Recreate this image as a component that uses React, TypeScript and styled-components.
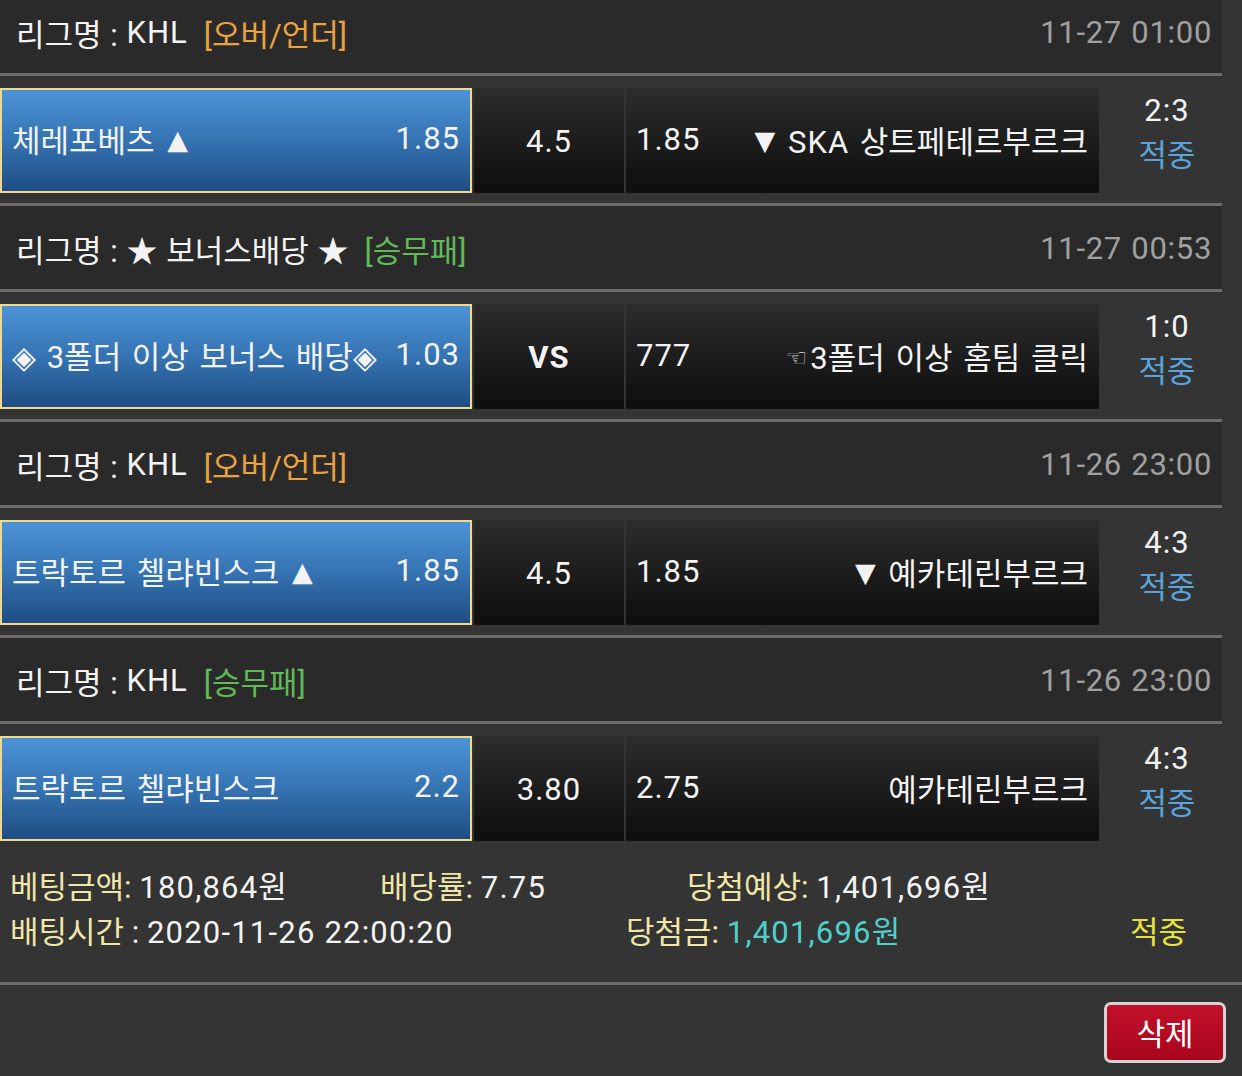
import styled, { createGlobalStyle } from "styled-components";

type TagKind = "ou" | "wdl";

interface Game {
  league: React.ReactNode;
  tag: string;
  tagKind: TagKind;
  date: string;
  home: React.ReactNode;
  homeOdds: string;
  middle: string;
  middleBold?: boolean;
  awayOdds: string;
  away: React.ReactNode;
  score: string;
  result: string;
}

const GlobalStyle = createGlobalStyle`
  html, body {
    margin: 0;
    padding: 0;
    background: #343434;
  }
  body {
    font-family: Roboto, "Noto Sans CJK KR", sans-serif;
    color: #f3f3f3;
  }
`;

const Page = styled.div`
  width: 1242px;
  height: 1076px;
  overflow: hidden;
  background: #343434;
`;

const List = styled.div`
  width: 1222px;
  margin-top: -10px;
`;

const LeagueHeader = styled.div`
  height: 83px;
  display: flex;
  align-items: center;
  justify-content: space-between;
  padding: 0 10px 0 16px;
  background: #2a2a2a;
  border-bottom: 3px solid #6b6b6b;
  font-size: 31px;
  word-spacing: 1px;
`;

const LeagueName = styled.div`
  display: flex;
  align-items: center;
  white-space: pre;
  padding-top: 2px;
`;

const Latin = styled.span`
  letter-spacing: 1px;
`;

const Tag = styled.span<{ $kind: TagKind }>`
  margin-left: 16px;
  color: ${(p) => (p.$kind === "ou" ? "#e9a23e" : "#62b957")};
`;

const GameDate = styled.div`
  color: #a0a0a0;
  letter-spacing: 0.7px;
  padding-top: 2px;
`;

const BetRow = styled.div<{ $last?: boolean }>`
  display: grid;
  grid-template-columns: 472px 150px 473px 1fr;
  column-gap: 2px;
  padding: ${(p) => (p.$last ? "12px 0 0" : "12px 0 10px")};
  background: #343434;
  border-bottom: ${(p) => (p.$last ? "none" : "3px solid #6b6b6b")};
`;

const HomeCell = styled.div`
  height: 105px;
  box-sizing: border-box;
  display: flex;
  align-items: center;
  justify-content: space-between;
  padding: 0 10px 5px 10px;
  border: 2px solid #f1d88f;
  background: linear-gradient(180deg, #4c93d6 0%, #3573b2 50%, #1e4d83 100%);
  font-size: 31px;
  white-space: nowrap;
  word-spacing: 3px;
`;

const Odds = styled.span`
  letter-spacing: 1px;
`;

const Arrow = styled.span`
  display: inline-block;
  vertical-align: 3px;
  font-family: "DejaVu Sans", sans-serif;
  font-size: 27px;
  margin: 0 2px;
`;

const MiddleCell = styled.div<{ $bold?: boolean }>`
  height: 105px;
  display: flex;
  align-items: center;
  justify-content: center;
  padding-top: 2px;
  box-sizing: border-box;
  background: linear-gradient(180deg, #2d2d2d 0%, #1b1b1b 55%, #0e0e0e 100%);
  font-size: 31px;
  font-weight: ${(p) => (p.$bold ? 700 : 400)};
  letter-spacing: 1px;
`;

const AwayCell = styled.div`
  height: 105px;
  display: flex;
  align-items: center;
  justify-content: space-between;
  padding: 0 11px 3px 10px;
  box-sizing: border-box;
  background: linear-gradient(180deg, #2d2d2d 0%, #1b1b1b 55%, #0e0e0e 100%);
  font-size: 31px;
  white-space: nowrap;
  word-spacing: 3px;
`;

const AwayName = styled.span`
  white-space: pre;
`;

const Hand = styled.span`
  display: inline-block;
  vertical-align: 3px;
  font-family: "DejaVu Sans", sans-serif;
  font-size: 24px;
  color: #d8d8d8;
  margin-right: 3px;
`;

const ScoreCol = styled.div`
  display: flex;
  flex-direction: column;
  align-items: center;
  padding-left: 11px;
  font-size: 31px;
  line-height: 45px;
`;

const Score = styled.span`
  letter-spacing: 1px;
`;

const Result = styled.span`
  color: #5aa2dc;
`;

const Summary = styled.div`
  padding: 24px 0 27px 10px;
  font-size: 31px;
  border-bottom: 3px solid #6b6b6b;
`;

const SummaryLine = styled.div<{ $cols: string }>`
  display: grid;
  grid-template-columns: ${(p) => p.$cols};
  align-items: center;
  height: 45px;
  line-height: 45px;
  overflow: hidden;
  white-space: nowrap;
`;

const Label = styled.span`
  color: #efe6a8;
`;

const Value = styled.span`
  letter-spacing: 1.2px;
`;

const Won = styled.span`
  color: #4fcfca;
  letter-spacing: 1.2px;
`;

const Hit = styled.span`
  color: #e7e23e;
`;

const Actions = styled.div`
  display: flex;
  justify-content: flex-end;
  padding: 17px 16px 0;
`;

const DeleteButton = styled.button`
  width: 122px;
  height: 61px;
  border: 3px solid #d9d3d3;
  border-radius: 7px;
  background: linear-gradient(180deg, #c1102a 0%, #a8061c 100%);
  color: #ffffff;
  font-family: Roboto, "Noto Sans CJK KR", sans-serif;
  font-size: 31px;
  padding: 0 0 3px;
`;

const games: Game[] = [
  {
    league: (
      <>
        리그명 : <Latin>KHL</Latin>
      </>
    ),
    tag: "[오버/언더]",
    tagKind: "ou",
    date: "11-27 01:00",
    home: (
      <>
        체레포베츠 <Arrow>▲</Arrow>
      </>
    ),
    homeOdds: "1.85",
    middle: "4.5",
    awayOdds: "1.85",
    away: (
      <>
        <Arrow>▼</Arrow> <Latin>SKA</Latin> 상트페테르부르크
      </>
    ),
    score: "2:3",
    result: "적중",
  },
  {
    league: "리그명 : ★ 보너스배당 ★",
    tag: "[승무패]",
    tagKind: "wdl",
    date: "11-27 00:53",
    home: "◈ 3폴더 이상 보너스 배당◈",
    homeOdds: "1.03",
    middle: "VS",
    middleBold: true,
    awayOdds: "777",
    away: (
      <>
        <Hand>☜</Hand>3폴더 이상 홈팀 클릭
      </>
    ),
    score: "1:0",
    result: "적중",
  },
  {
    league: (
      <>
        리그명 : <Latin>KHL</Latin>
      </>
    ),
    tag: "[오버/언더]",
    tagKind: "ou",
    date: "11-26 23:00",
    home: (
      <>
        트락토르 첼랴빈스크 <Arrow>▲</Arrow>
      </>
    ),
    homeOdds: "1.85",
    middle: "4.5",
    awayOdds: "1.85",
    away: (
      <>
        <Arrow>▼</Arrow> 예카테린부르크
      </>
    ),
    score: "4:3",
    result: "적중",
  },
  {
    league: (
      <>
        리그명 : <Latin>KHL</Latin>
      </>
    ),
    tag: "[승무패]",
    tagKind: "wdl",
    date: "11-26 23:00",
    home: "트락토르 첼랴빈스크",
    homeOdds: "2.2",
    middle: "3.80",
    awayOdds: "2.75",
    away: "예카테린부르크",
    score: "4:3",
    result: "적중",
  },
];

export default function App() {
  return (
    <Page>
      <GlobalStyle />
      <List>
        {games.map((g, i) => (
          <div key={i}>
            <LeagueHeader>
              <LeagueName>
                {g.league}
                <Tag $kind={g.tagKind}>{g.tag}</Tag>
              </LeagueName>
              <GameDate>{g.date}</GameDate>
            </LeagueHeader>
            <BetRow $last={i === games.length - 1}>
              <HomeCell>
                <span>{g.home}</span>
                <Odds>{g.homeOdds}</Odds>
              </HomeCell>
              <MiddleCell $bold={g.middleBold}>{g.middle}</MiddleCell>
              <AwayCell>
                <Odds>{g.awayOdds}</Odds>
                <AwayName>{g.away}</AwayName>
              </AwayCell>
              <ScoreCol>
                <Score>{g.score}</Score>
                <Result>{g.result}</Result>
              </ScoreCol>
            </BetRow>
          </div>
        ))}
      </List>
      <Summary>
        <SummaryLine $cols="370px 307px 1fr">
          <span>
            <Label>베팅금액:</Label> <Value>180,864</Value>원
          </span>
          <span>
            <Label>배당률:</Label> <Value>7.75</Value>
          </span>
          <span>
            <Label>당첨예상:</Label> <Value>1,401,696</Value>원
          </span>
        </SummaryLine>
        <SummaryLine $cols="616px 504px 1fr">
          <span>
            <Label>배팅시간</Label> : <Value>2020-11-26 22:00:20</Value>
          </span>
          <span>
            <Label>당첨금:</Label> <Won>1,401,696원</Won>
          </span>
          <Hit>적중</Hit>
        </SummaryLine>
      </Summary>
      <Actions>
        <DeleteButton>삭제</DeleteButton>
      </Actions>
    </Page>
  );
}
